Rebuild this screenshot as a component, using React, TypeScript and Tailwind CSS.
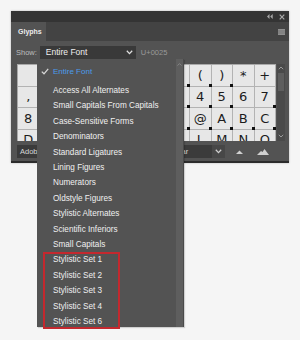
import React from "react";

const rows: string[][] = [
  [" ", "!", '"', "#", "$", "%", "&", "'", "(", ")", "*", "+"],
  [",", "-", ".", "/", "0", "1", "2", "3", "4", "5", "6", "7"],
  ["8", "9", ":", ";", "<", "=", ">", "?", "@", "A", "B", "C"],
  ["D", "E", "F", "G", "H", "I", "J", "K", "L", "M", "N", "O"],
];
const marks: Record<number, number[]> = {
  0: [7, 8, 9],
  1: [0, 7, 8, 9, 11],
  2: [0, 7, 8, 9, 10, 11],
  3: [],
};

const items = [
  "Access All Alternates",
  "Small Capitals From Capitals",
  "Case-Sensitive Forms",
  "Denominators",
  "Standard Ligatures",
  "Lining Figures",
  "Numerators",
  "Oldstyle Figures",
  "Stylistic Alternates",
  "Scientific Inferiors",
  "Small Capitals",
  "Stylistic Set 1",
  "Stylistic Set 2",
  "Stylistic Set 3",
  "Stylistic Set 4",
  "Stylistic Set 6",
];

function Chevron({ color = "#e0e0e0" }: { color?: string }) {
  return (
    <svg width="7" height="5" viewBox="0 0 7 5">
      <path d="M0.8 0.8 L3.5 3.6 L6.2 0.8" stroke={color} strokeWidth="1.3" fill="none" />
    </svg>
  );
}

export default function App() {
  return (
    <div className="relative w-[300px] h-[340px] overflow-hidden bg-[#f5f5f5] font-['Liberation_Sans',Arial,sans-serif]">
      <div className="pt-[11px] pl-[11px]">
        <div className="w-[278px] bg-[#535353] shadow-[0_0_2px_rgba(0,0,0,0.25)]">
          {/* header strip */}
          <div className="h-[11px] bg-[#343434] flex items-center justify-end pr-[4px] gap-[6px]">
            <svg width="6" height="5" viewBox="0 0 6 5">
              <path d="M0 2.5 L2.5 0 L2.5 5Z M3.2 2.5 L5.7 0 L5.7 5Z" fill="#a8a8a8" />
            </svg>
            <svg width="6" height="6" viewBox="0 0 6 6">
              <path d="M0.7 0.7 L5.3 5.3 M5.3 0.7 L0.7 5.3" stroke="#a8a8a8" strokeWidth="1.2" />
            </svg>
          </div>
          {/* tab bar */}
          <div className="h-[19px] bg-[#434343] flex items-stretch justify-between">
            <div className="w-[35px] bg-[#535353] flex items-center pl-[7px] text-[7px] font-bold text-[#ececec] leading-none">
              Glyphs
            </div>
            <div className="flex items-center pr-[4px]">
              <svg width="7" height="6" viewBox="0 0 7 6">
                <rect x="0" y="0" width="7" height="6" fill="#8e8e8e" />
                <path d="M0 2h7M0 4h7" stroke="#6a6a6a" strokeWidth="0.6" />
              </svg>
            </div>
          </div>
          {/* show row */}
          <div className="mt-[5px] h-[13px] flex items-center pl-[5px]">
            <span className="text-[7.5px] text-[#bdbdbd] leading-none">Show:</span>
            <div className="ml-[3px] w-[96px] h-[13px] bg-[#393939] flex items-center justify-between pl-[6px] pr-[3px]">
              <span className="text-[8.5px] text-[#efefef] leading-none">Entire Font</span>
              <Chevron />
            </div>
            <span className="ml-[5px] text-[7.5px] text-[#9a9a9a] leading-none">U+0025</span>
          </div>
          {/* grid */}
          <div className="mt-[5px] pl-[6px] flex h-[77px]">
            <div className="overflow-hidden h-[77px] border-l border-t border-[#a9a9a9]">
              <div className="grid grid-cols-[repeat(12,21.5px)] auto-rows-[21.5px]">
                {rows.map((r, ri) =>
                  r.map((c, ci) => (
                    <div
                      key={ri + "-" + ci}
                      className="relative bg-[#e7e7e7] border-r border-b border-[#b3b3b3] flex items-center justify-center text-[13px] text-[#1c1c1c] leading-none font-['DejaVu_Sans',sans-serif]"
                    >
                      {c}
                      {marks[ri].includes(ci) && (
                        <div className="absolute right-[-1px] bottom-[-1px] w-[3px] h-[3px] bg-[#111]" />
                      )}
                    </div>
                  ))
                )}
              </div>
            </div>
            <div className="ml-[1px] w-[8px] h-[77px] bg-[#4a4a4a] flex flex-col items-center">
              <svg className="mt-[2px]" width="6" height="4" viewBox="0 0 6 4">
                <path d="M0.8 3.2 L3 1 L5.2 3.2" stroke="#9a9a9a" strokeWidth="1" fill="none" />
              </svg>
              <div className="mt-[3px] w-[6px] h-[18px] bg-[#5e5e5e]" />
              <div className="flex-1" />
              <svg className="mb-[3px]" width="6" height="4" viewBox="0 0 6 4">
                <path d="M0.8 0.8 L3 3 L5.2 0.8" stroke="#9a9a9a" strokeWidth="1" fill="none" />
              </svg>
            </div>
          </div>
          {/* bottom toolbar */}
          <div className="mt-[4px] h-[13px] flex items-center pl-[6px]">
            <div className="w-[110px] h-[13px] bg-[#3b3b3b] flex items-center pl-[3px] text-[7.5px] text-[#d8d8d8] leading-none overflow-hidden whitespace-nowrap">
              Adobe Clean
            </div>
            <div className="ml-[4px] w-[81px] h-[13px] bg-[#3b3b3b] flex items-center pl-[31px] text-[7.5px] text-[#d8d8d8] leading-none">
              Regular
            </div>
            <div className="w-[13px] h-[13px] bg-[#474747] flex items-center justify-center">
              <Chevron color="#cfcfcf" />
            </div>
            <svg className="ml-[11px]" width="7" height="4" viewBox="0 0 7 4">
              <path d="M0 4 L3.5 0.5 L7 4Z" fill="#d0d0d0" />
            </svg>
            <svg className="ml-[14px]" width="12" height="6" viewBox="0 0 12 6">
              <path d="M0 6 L4 2 L5.5 3 L7.5 0 L12 6Z" fill="#d0d0d0" />
            </svg>
          </div>
          <div className="h-[3px]" />
          <div className="h-[2px] bg-[#2c2c2c]" />
        </div>
      </div>

      {/* dropdown menu */}
      <div className="absolute left-[37px] top-[59px] w-[147px] h-[268px] bg-[#535353] flex overflow-hidden shadow-[1px_1px_1px_rgba(0,0,0,0.15)]">
        <div className="flex-1 pt-[5px]">
          <div className="h-[15px] flex items-center relative">
            <svg className="absolute left-[4px]" width="8" height="7" viewBox="0 0 8 7">
              <path d="M0.8 3.6 L3 5.8 L7.2 0.8" stroke="#d8d8d8" strokeWidth="1.3" fill="none" />
            </svg>
            <span className="pl-[16px] text-[8px] text-[#4b9ceb] leading-none">Entire Font</span>
          </div>
          <div className="h-[4.5px]" />
          {items.map((t) => (
            <div key={t} className="h-[15.4px] flex items-center pl-[16px] text-[8.2px] text-[#f0f0f0] leading-none whitespace-nowrap">
              {t}
            </div>
          ))}
        </div>
        <div className="w-[7px] bg-[#5e5e5e] flex flex-col items-center">
          <svg className="mt-[4px]" width="5" height="3" viewBox="0 0 5 3">
            <path d="M0.5 2.6 L2.5 0.6 L4.5 2.6" stroke="#8a8a8a" strokeWidth="0.9" fill="none" />
          </svg>
        </div>
        <div className="w-[1px] bg-[#4a4a4a]" />
      </div>

      {/* annotation box */}
      <div className="absolute left-[43px] top-[252px] w-[77px] h-[77px] border-2 border-[#c4282e]" />
    </div>
  );
}
